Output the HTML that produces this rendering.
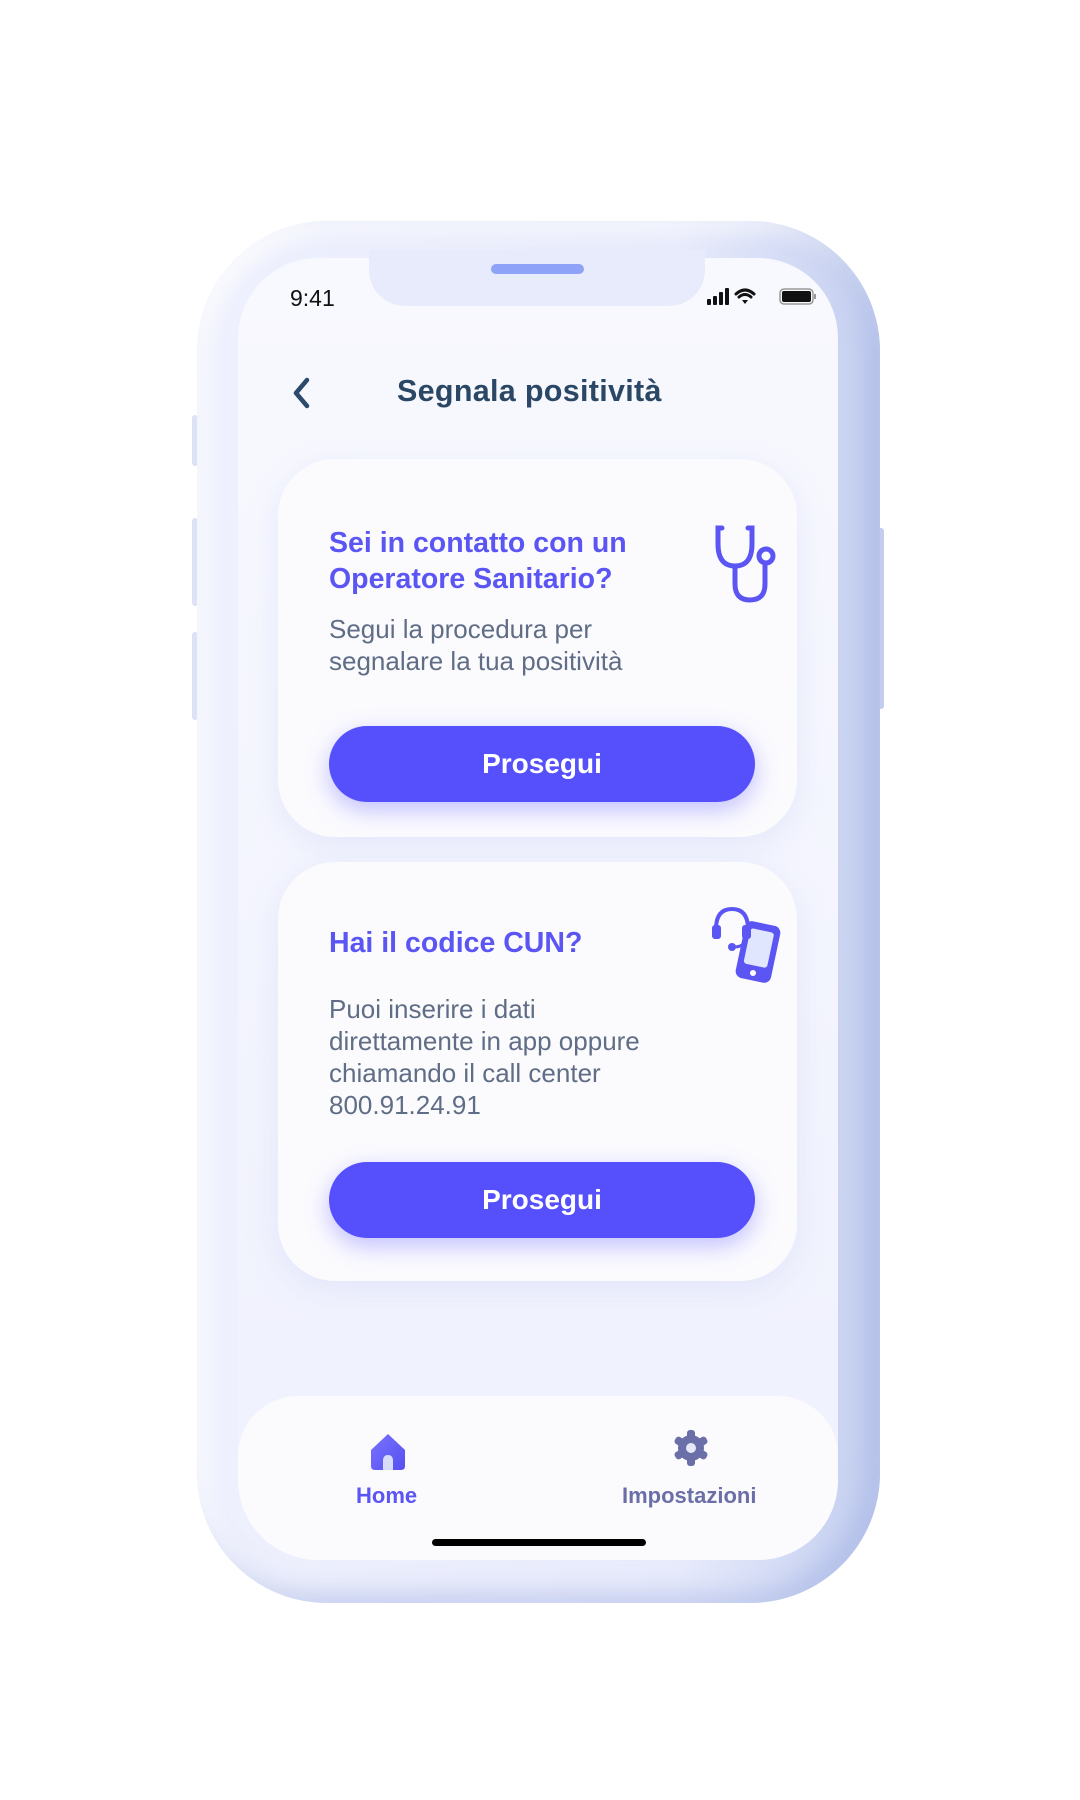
<!DOCTYPE html>
<html><head><meta charset="utf-8"><style>
*{margin:0;padding:0;box-sizing:border-box}
body{width:1080px;height:1800px;background:#fff;position:relative;overflow:hidden;font-family:"Liberation Sans",sans-serif}
.abs{position:absolute}
.phone{left:197px;top:221px;width:683px;height:1382px;border-radius:130px;background:linear-gradient(90deg,#eef0fd 0%,#e8ebfc 70%,#c4cff0 100%);box-shadow:inset -14px -10px 24px rgba(160,175,225,.5),inset 10px 10px 20px rgba(255,255,255,.8)}
.screen{left:238px;top:258px;width:600px;height:1302px;border-radius:80px;background:linear-gradient(180deg,#f8f9fe 0%,#eff1fd 100%);overflow:hidden}
.notch{left:369px;top:250px;width:336px;height:56px;background:#e8ebfc;border-radius:0 0 36px 36px}
.card{left:278px;width:519px;background:#fbfbfe;border-radius:57px;box-shadow:0 8px 30px rgba(200,205,245,.35)}
.ct{left:329px;color:#5b55f4;font-weight:bold;font-size:28.5px;line-height:36px}
.cb{left:329px;color:#606d86;font-size:26px;line-height:32px}
.btn{left:329px;width:426px;height:76px;border-radius:38px;background:#5550fb;color:#fff;font-weight:bold;font-size:28px;text-align:center;line-height:76px;box-shadow:0 8px 24px rgba(85,80,251,.35)}
.side{background:#dde2f5;border-radius:3px}
</style></head><body>
<div class="abs side" style="left:192px;top:415px;width:6px;height:51px"></div>
<div class="abs side" style="left:192px;top:518px;width:6px;height:88px"></div>
<div class="abs side" style="left:192px;top:632px;width:6px;height:88px"></div>
<div class="abs side" style="left:878px;top:528px;width:6px;height:181px;background:#c2cdef"></div>
<div class="abs phone"></div>
<div class="abs screen"></div>
<div class="abs notch"></div>
<div class="abs" style="left:491px;top:264px;width:93px;height:10px;border-radius:5px;background:#8ea2f7"></div>
<div class="abs" style="left:290px;top:285px;font-size:23px;color:#111">9:41</div>
<svg class="abs" style="left:706px;top:286px" width="112" height="22" viewBox="0 0 112 22">
<rect x="1" y="13" width="4" height="6" rx="1" fill="#111"/><rect x="7" y="10" width="4" height="9" rx="1" fill="#111"/><rect x="13" y="6" width="4" height="13" rx="1" fill="#111"/><rect x="19" y="2" width="4" height="17" rx="1" fill="#111"/>
<path d="M30 8 Q39 0 48 8 M33 11 Q39 6 45 11" stroke="#111" stroke-width="3" fill="none" stroke-linecap="round"/><path d="M36 14 L39 18 L42 14 Z" fill="#111"/>
<rect x="74" y="3" width="33" height="15" rx="4" fill="none" stroke="#999" stroke-width="1.5"/><rect x="76" y="5" width="29" height="11" rx="2" fill="#111"/><rect x="108" y="8" width="2" height="5" fill="#999"/>
</svg>
<svg class="abs" style="left:290px;top:377px" width="24" height="32"><path d="M17 3 L6 16 L17 29" stroke="#2c4a6b" stroke-width="4.5" fill="none" stroke-linecap="round" stroke-linejoin="round"/></svg>
<div class="abs" style="left:397px;top:374px;font-size:30.5px;font-weight:bold;color:#2b4766;letter-spacing:0.3px">Segnala positività</div>

<div class="abs card" style="top:459px;height:378px"></div>
<div class="abs ct" style="top:525px">Sei in contatto con un<br>Operatore Sanitario?</div>
<div class="abs cb" style="top:613px">Segui la procedura per<br>segnalare la tua positività</div>
<div class="abs btn" style="top:726px">Prosegui</div>
<svg class="abs" style="left:710px;top:522px" width="72" height="82" viewBox="0 0 72 82"><g stroke="#5b55f4" stroke-width="5" fill="none" stroke-linecap="round"><path d="M12 6 H8 V22 Q8 44 25 44 Q42 44 42 22 V6 H38"/><path d="M25 44 V62 Q25 78 40 78 Q55 78 55 62 V42"/><circle cx="56" cy="34" r="7"/></g></svg>

<div class="abs card" style="top:862px;height:419px"></div>
<div class="abs ct" style="top:925px">Hai il codice CUN?</div>
<div class="abs cb" style="top:993px">Puoi inserire i dati<br>direttamente in app oppure<br>chiamando il call center<br>800.91.24.91</div>
<div class="abs btn" style="top:1162px">Prosegui</div>
<svg class="abs" style="left:710px;top:903px" width="72" height="82" viewBox="0 0 72 82">
<rect x="30" y="20" width="36" height="58" rx="7" transform="rotate(12 48 49)" fill="#5b55f4"/>
<rect x="36" y="27" width="24" height="36" rx="3" transform="rotate(12 48 49)" fill="#dfe6fd"/>
<circle cx="43" cy="70" r="3" fill="#fff"/>
<path d="M6 26 Q6 6 22 6 Q38 6 38 26" stroke="#5b55f4" stroke-width="4" fill="none"/>
<rect x="2" y="22" width="9" height="14" rx="3" fill="#5b55f4"/><rect x="32" y="22" width="9" height="14" rx="3" fill="#5b55f4"/>
<path d="M36 36 Q34 44 24 44" stroke="#5b55f4" stroke-width="3" fill="none"/><circle cx="22" cy="44" r="4" fill="#5b55f4"/>
</svg>

<div class="abs" style="left:238px;top:1396px;width:600px;height:164px;background:#fbfbfe;border-radius:60px 60px 80px 80px"></div>
<svg class="abs" style="left:368px;top:1432px" width="40" height="40" viewBox="0 0 40 40"><defs><linearGradient id="h" x1="0" y1="0" x2="1" y2="1"><stop offset="0" stop-color="#7a73ff"/><stop offset="1" stop-color="#5550f0"/></linearGradient></defs><path d="M20 2 L37 18 V34 Q37 38 33 38 H7 Q3 38 3 34 V18 Z" fill="url(#h)"/><path d="M15 38 V29 Q15 23 20 23 Q25 23 25 29 V38 Z" fill="#d8dcfc"/></svg>
<div class="abs" style="left:356px;top:1483px;font-size:22px;font-weight:bold;color:#5b55f4">Home</div>
<svg class="abs" style="left:671px;top:1428px" width="40" height="40" viewBox="0 0 40 40"><g fill="#6b6fa8"><circle cx="20" cy="20" r="13"/><g id="t"><rect x="16" y="2" width="8" height="9" rx="3"/><rect x="16" y="29" width="8" height="9" rx="3"/></g><use href="#t" transform="rotate(60 20 20)"/><use href="#t" transform="rotate(120 20 20)"/></g><circle cx="20" cy="20" r="5" fill="#e6e8f7"/></svg>
<div class="abs" style="left:622px;top:1483px;font-size:22px;font-weight:bold;color:#6b6fa8">Impostazioni</div>
<div class="abs" style="left:432px;top:1539px;width:214px;height:7px;border-radius:4px;background:#000"></div>
</body></html>
